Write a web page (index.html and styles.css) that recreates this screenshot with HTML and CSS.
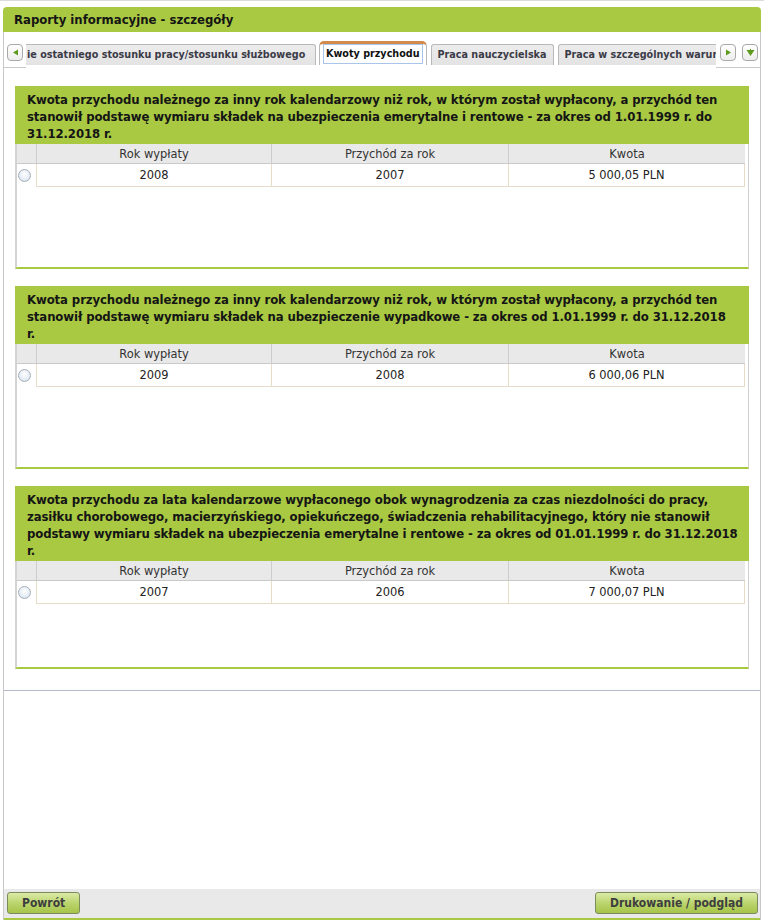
FILE: index.html
```html
<!DOCTYPE html>
<html lang="pl">
<head>
<meta charset="utf-8">
<title>Raporty informacyjne - szczegóły</title>
<link rel="stylesheet" href="styles.css">
</head>
<body>
<div class="page">
  <div class="panel">
    <div class="panel-head">Raporty informacyjne - szczegóły</div>
    <div class="panel-body">
      <div class="tabbar">
        <div class="side side-left">
          <span class="nav"><svg width="7" height="7" viewBox="0 0 7 7"><path d="M1 3.5 L6 0.5 L6 6.5 Z" fill="#5d9a1e"/></svg></span>
        </div>
        <div class="tabs-viewport">
          <div class="tab tab-first">ie ostatniego stosunku pracy/stosunku służbowego</div>
          <div class="tab tab-active"><span class="focus">Kwoty przychodu</span></div>
          <div class="tab">Praca nauczycielska</div>
          <div class="tab">Praca w szczególnych warunkach</div>
        </div>
        <div class="side side-right">
          <span class="nav"><svg width="7" height="7" viewBox="0 0 7 7"><path d="M6 3.5 L1 0.5 L1 6.5 Z" fill="#5d9a1e"/></svg></span>
          <span class="nav"><svg width="9" height="8" viewBox="0 0 9 8"><path d="M0.5 1 L8.5 1 L4.5 7 Z" fill="#5d9a1e"/><path d="M4.5 0 L4.5 2" stroke="#5d9a1e" stroke-width="1"/></svg></span>
        </div>
      </div>

      <div class="content">
        <section class="box">
          <div class="box-title">Kwota przychodu należnego za inny rok kalendarzowy niż rok, w którym został wypłacony, a przychód ten stanowił podstawę wymiaru składek na ubezpieczenia emerytalne i rentowe - za okres od 1.01.1999 r. do 31.12.2018 r.</div>
          <div class="box-area">
            <div class="grid">
              <div class="hcell hsel"></div>
              <div class="hcell">Rok wypłaty</div>
              <div class="hcell">Przychód za rok</div>
              <div class="hcell">Kwota</div>
              <div class="dsel"><span class="radio"></span></div>
              <div class="dcell first">2008</div>
              <div class="dcell">2007</div>
              <div class="dcell last">5 000,05 PLN</div>
            </div>
          </div>
        </section>

        <section class="box">
          <div class="box-title">Kwota przychodu należnego za inny rok kalendarzowy niż rok, w którym został wypłacony, a przychód ten stanowił podstawę wymiaru składek na ubezpieczenie wypadkowe - za okres od 1.01.1999 r. do 31.12.2018<br>r.</div>
          <div class="box-area">
            <div class="grid">
              <div class="hcell hsel"></div>
              <div class="hcell">Rok wypłaty</div>
              <div class="hcell">Przychód za rok</div>
              <div class="hcell">Kwota</div>
              <div class="dsel"><span class="radio"></span></div>
              <div class="dcell first">2009</div>
              <div class="dcell">2008</div>
              <div class="dcell last">6 000,06 PLN</div>
            </div>
          </div>
        </section>

        <section class="box">
          <div class="box-title">Kwota przychodu za lata kalendarzowe wypłaconego obok wynagrodzenia za czas niezdolności do pracy, zasiłku chorobowego, macierzyńskiego, opiekuńczego, świadczenia rehabilitacyjnego, który nie stanowił podstawy wymiaru składek na ubezpieczenia emerytalne i rentowe - za okres od 01.01.1999 r. do 31.12.2018 r.</div>
          <div class="box-area">
            <div class="grid">
              <div class="hcell hsel"></div>
              <div class="hcell">Rok wypłaty</div>
              <div class="hcell">Przychód za rok</div>
              <div class="hcell">Kwota</div>
              <div class="dsel"><span class="radio"></span></div>
              <div class="dcell first">2007</div>
              <div class="dcell">2006</div>
              <div class="dcell last">7 000,07 PLN</div>
            </div>
          </div>
        </section>
      </div>

      <div class="spacer"></div>

      <div class="footer">
        <button class="btn">Powrót</button>
        <button class="btn">Drukowanie / podgląd</button>
      </div>
    </div>
  </div>
</div>
</body>
</html>
```

FILE: styles.css
```css
* { box-sizing: border-box; }

html, body {
  margin: 0;
  padding: 0;
  background: #ffffff;
}

body {
  font-family: "DejaVu Sans Condensed", "DejaVu Sans", sans-serif;
  color: #222;
}

.page {
  border-top: 1px solid #dcdcdc;
  padding: 6px 3px 0 3px;
  height: 924px;
}

.panel {
  width: 758px;
  height: 913px;
  display: flex;
  flex-direction: column;
}

.panel-head {
  height: 25px;
  background: #a9c943;
  border-radius: 4px 4px 0 0;
  padding-left: 11px;
  font-weight: bold;
  font-size: 13px;
  line-height: 25px;
  color: #151515;
}

.panel-body {
  flex: 1;
  display: flex;
  flex-direction: column;
  border-left: 1px solid #c9c9c9;
  border-right: 1px solid #c9c9c9;
}

/* tabs */
.tabbar {
  height: 36px;
  display: flex;
}

.side {
  border-bottom: 1px solid #c9c9c9;
  display: flex;
  align-items: flex-start;
  padding-top: 12px;
}

.side-left {
  width: 22px;
  padding-left: 3px;
}

.side-right {
  flex: 1;
  padding-left: 4px;
  gap: 6px;
}

.nav {
  width: 16px;
  height: 17px;
  border: 1px solid #a9a9a9;
  border-radius: 4px;
  background: linear-gradient(#ffffff, #ededed);
  display: flex;
  align-items: center;
  justify-content: center;
}

.tabs-viewport {
  width: 690px;
  overflow: hidden;
  display: flex;
  align-items: flex-end;
  padding-bottom: 3px;
  white-space: nowrap;
}

.tab {
  flex: none;
  height: 21px;
  margin-right: 4px;
  padding: 0 6px;
  border: 1px solid #b9b9b9;
  border-bottom: none;
  border-radius: 3px 3px 0 0;
  background: linear-gradient(#ececec, #e3e3e3);
  font-weight: bold;
  font-size: 10.7px;
  line-height: 20px;
  color: #3b3b48;
}

.tab-first {
  width: 290px;
  margin-right: 3px;
  border-left: none;
  border-radius: 0 3px 0 0;
  padding-left: 1px;
}

.tab-active {
  height: 24px;
  border-top: 3px solid #d48a4c;
  border-radius: 5px 5px 0 0;
  background: #ffffff;
  padding: 0 3px;
  color: #111;
}

.focus {
  display: inline-block;
  border: 1px solid #a9c6ea;
  padding: 0 2px;
  line-height: 18px;
}

/* content */
.content {
  padding: 18px 10px 21px 11px;
  border-bottom: 1px solid #b5bac9;
}

.box {
  width: 734px;
  height: 183px;
  display: flex;
  flex-direction: column;
  margin-bottom: 17px;
}

.box:last-child {
  margin-bottom: 0;
}

.box-title {
  background: #a9c943;
  padding: 5px 10px 2px 12px;
  font-weight: bold;
  font-size: 13px;
  letter-spacing: -0.1px;
  line-height: 17px;
  color: #151515;
}

.box-area {
  flex: 1;
  border-left: 2px solid #d3d3d3;
  border-right: 1px solid #cfcfcf;
  border-bottom: 2px solid #a9c943;
}

.grid {
  display: grid;
  grid-template-columns: 19px 235px 237px 237px;
  font-size: 12.7px;
}

.hcell {
  height: 20px;
  background: #e9e9e9;
  border-left: 1px solid #cdcdcd;
  border-bottom: 1px solid #c9c9c9;
  text-align: center;
  line-height: 19px;
  color: #333;
}

.hsel {
  border-left: none;
}

.dsel {
  height: 23px;
  display: flex;
  align-items: center;
  padding-left: 1px;
}

.radio {
  width: 13px;
  height: 13px;
  border-radius: 50%;
  border: 1px solid #a8aeb6;
  background: radial-gradient(circle at 50% 40%, #ffffff 0%, #e4ecf5 60%, #cbd6e3 100%);
}

.dcell {
  height: 23px;
  border-left: 1px solid #e6dcc9;
  border-bottom: 1px solid #e6dcc9;
  text-align: center;
  line-height: 22px;
  color: #222;
}

.dcell.last {
  border-right: 1px solid #e6dcc9;
}

.spacer {
  flex: 1;
}

/* footer */
.footer {
  height: 31px;
  background: #e9e9e9;
  border-bottom: 2px solid #a9c943;
  display: flex;
  justify-content: space-between;
  align-items: flex-start;
  padding: 3px 2px 0 3px;
}

.btn {
  height: 22px;
  padding: 0 14px;
  border: 1px solid #7b8b5c;
  border-radius: 3px;
  background: linear-gradient(#dbeaa6, #b9d36a 55%, #a6c44a);
  font-family: "DejaVu Sans Condensed", "DejaVu Sans", sans-serif;
  font-weight: bold;
  font-size: 12px;
  color: #3e3e3e;
  line-height: 20px;
}
```
